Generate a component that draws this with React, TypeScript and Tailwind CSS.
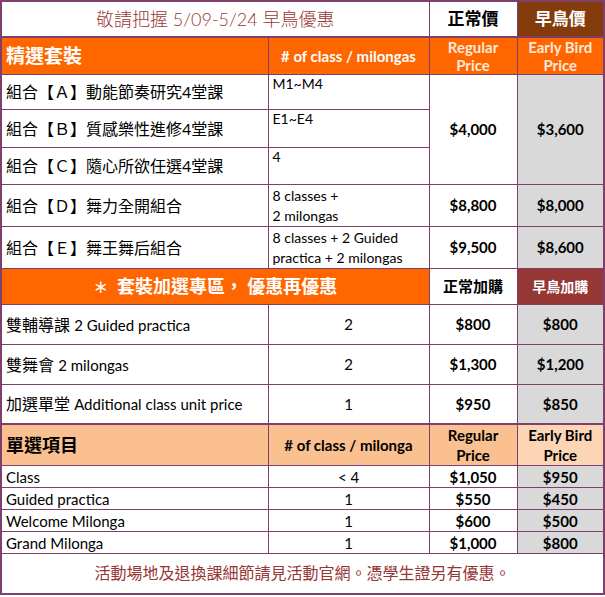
import React from "react";

const line = "border border-[#7f3f6b] py-0";
const font = "font-['Lato','Noto_Sans_CJK_TC',sans-serif]";

// 組合套裝
const packages = [
  { name: "組合【Ａ】動能節奏研究4堂課", detail: "M1~M4", h: "h-[35px]" },
  { name: "組合【Ｂ】質感樂性進修4堂課", detail: "E1~E4", h: "h-[38px]" },
  { name: "組合【Ｃ】隨心所欲任選4堂課", detail: "4", h: "h-[37px]" },
];

const addons = [
  { zh: "雙輔導課", en: "2 Guided practica", n: "2", reg: "$800", early: "$800" },
  { zh: "雙舞會", en: "2 milongas", n: "2", reg: "$1,300", early: "$1,200" },
  { zh: "加選單堂", en: "Additional class unit price", n: "1", reg: "$950", early: "$850" },
];

const singles = [
  { name: "Class", n: "< 4", reg: "$1,050", early: "$950" },
  { name: "Guided practica", n: "1", reg: "$550", early: "$450" },
  { name: "Welcome Milonga", n: "1", reg: "$600", early: "$500" },
  { name: "Grand Milonga", n: "1", reg: "$1,000", early: "$800" },
];

export default function App() {
  return (
    <div className={`w-[605px] bg-white ${font} text-black`}>
      <table className="table-fixed border-collapse w-[603px] border-2 border-[#7f3f6b]">
        <colgroup>
          <col className="w-[267px]" />
          <col className="w-[161px]" />
          <col className="w-[88px]" />
          <col className="w-[87px]" />
        </colgroup>
        <tbody>
          {/* title */}
          <tr>
            <td colSpan={2} className={`${line} h-[36px] text-center text-[18px] font-light leading-[22px] text-[#953735]`}>
              敬請把握 5/09-5/24 早鳥優惠
            </td>
            <td className={`${line} text-center text-[17px] font-bold leading-[22px]`}>正常價</td>
            <td className={`${line} bg-[#843c0c] text-center text-[17px] font-bold leading-[22px] text-white`}>早鳥價</td>
          </tr>

          {/* header */}
          <tr className="border-t-2 border-[#7f3f6b] bg-[#ff6600]">
            <td className={`${line} h-[37px] px-1 text-[19px] font-bold leading-[22px] text-white`}>精選套裝</td>
            <td className={`${line} text-center text-[15px] font-bold leading-[18px] text-white`}># of class / milongas</td>
            <td className={`${line} text-center text-[15px] font-bold leading-[18px] text-[#fde9d9]`}>
              Regular
              <br />
              Price
            </td>
            <td className={`${line} text-center text-[15px] font-bold leading-[18px] text-[#fde9d9]`}>
              Early Bird
              <br />
              Price
            </td>
          </tr>

          {packages.map((p, i) => (
            <tr key={p.name}>
              <td className={`${line} ${p.h} px-1 text-[16px] leading-[22px]`}>{p.name}</td>
              <td className={`${line} align-top px-1 text-[14px] leading-[18px]`}>{p.detail}</td>
              {i === 0 && (
                <>
                  <td rowSpan={3} className={`${line} text-center text-[15px] font-bold`}>$4,000</td>
                  <td rowSpan={3} className={`${line} bg-[#d9d9d9] text-center text-[15px] font-bold`}>$3,600</td>
                </>
              )}
            </tr>
          ))}

          <tr>
            <td className={`${line} h-[42px] px-1 text-[16px] leading-[22px]`}>組合【Ｄ】舞力全開組合</td>
            <td className={`${line} px-1 text-[14px] leading-[20px]`}>
              8 classes +
              <br />2 milongas
            </td>
            <td className={`${line} text-center text-[15px] font-bold`}>$8,800</td>
            <td className={`${line} bg-[#d9d9d9] text-center text-[15px] font-bold`}>$8,000</td>
          </tr>
          <tr>
            <td className={`${line} h-[42px] px-1 text-[16px] leading-[22px]`}>組合【Ｅ】舞王舞后組合</td>
            <td className={`${line} px-1 text-[14px] leading-[20px]`}>
              8 classes + 2 Guided
              <br />
              practica + 2 milongas
            </td>
            <td className={`${line} text-center text-[15px] font-bold`}>$9,500</td>
            <td className={`${line} bg-[#d9d9d9] text-center text-[15px] font-bold`}>$8,600</td>
          </tr>

          {/* 加選專區 */}
          <tr>
            <td colSpan={2} className={`${line} h-[36px] bg-[#ff6600] text-center text-[18px] font-bold leading-[22px] text-white`}>
              <span className="text-[15px]">＊</span>&nbsp;&nbsp;套裝加選專區，&nbsp;優惠再優惠
            </td>
            <td className={`${line} text-center text-[15px] font-bold`}>正常加購</td>
            <td className={`${line} bg-[#953735] text-center text-[14px] font-bold text-white`}>早鳥加購</td>
          </tr>
          {addons.map((a, i) => (
            <tr key={a.zh}>
              <td className={`${line} ${i === 2 ? "h-[39px]" : "h-[40px]"} px-1 leading-[22px]`}>
                <span className="text-[16px]">{a.zh}</span> <span className="text-[15px]">{a.en}</span>
              </td>
              <td className={`${line} text-center text-[15px]`}>{a.n}</td>
              <td className={`${line} text-center text-[15px] font-bold`}>{a.reg}</td>
              <td className={`${line} bg-[#d9d9d9] text-center text-[15px] font-bold`}>{a.early}</td>
            </tr>
          ))}

          {/* 單選項目 */}
          <tr className="border-t-2 border-[#7f3f6b]">
            <td className={`${line} h-[42px] bg-[#fac090] px-1 text-[18px] font-bold leading-[22px]`}>單選項目</td>
            <td className={`${line} bg-[#fac090] text-center text-[15px] font-bold leading-[18px]`}># of class / milonga</td>
            <td className={`${line} bg-[#fac090] text-center text-[15px] font-bold leading-[20px]`}>
              Regular
              <br />
              Price
            </td>
            <td className={`${line} bg-[#fcd5b4] text-center text-[15px] font-bold leading-[20px]`}>
              Early Bird
              <br />
              Price
            </td>
          </tr>
          {singles.map((s) => (
            <tr key={s.name}>
              <td className={`${line} h-[22px] px-1 text-[15px] leading-[20px]`}>{s.name}</td>
              <td className={`${line} text-center text-[15px] leading-[20px]`}>{s.n}</td>
              <td className={`${line} text-center text-[15px] font-bold leading-[20px]`}>{s.reg}</td>
              <td className={`${line} bg-[#d9d9d9] text-center text-[15px] font-bold leading-[20px]`}>{s.early}</td>
            </tr>
          ))}

          <tr>
            <td colSpan={4} className={`${line} h-[40px] text-center text-[16px] leading-[22px] text-[#953735]`}>
              活動場地及退換課細節請見活動官網。憑學生證另有優惠。
            </td>
          </tr>
        </tbody>
      </table>
    </div>
  );
}
